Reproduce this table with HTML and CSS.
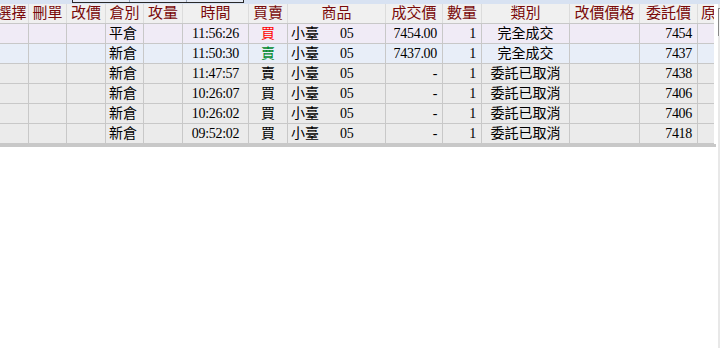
FILE: index.html
```html
<!DOCTYPE html>
<html lang="zh-Hant">
<head>
<meta charset="utf-8">
<title>委託回報</title>
<link rel="stylesheet" href="styles.css">
</head>
<body>
<div class="window">
  <div class="strip"><div class="tab"><span></span><span></span><span></span></div></div>
  <div class="main">
    <div class="grid">
      <div class="row head">
        <div class="c ctr"><span class="clip">選擇</span></div>
        <div class="c ctr">刪單</div>
        <div class="c ctr">改價</div>
        <div class="c ctr">倉別</div>
        <div class="c ctr">攻量</div>
        <div class="c ctr">時間</div>
        <div class="c ctr">買賣</div>
        <div class="c ctr">商品</div>
        <div class="c ctr">成交價</div>
        <div class="c ctr">數量</div>
        <div class="c ctr">類別</div>
        <div class="c ctr">改價價格</div>
        <div class="c ctr">委託價</div>
        <div class="c lft last">原</div>
      </div>

      <div class="row r1">
        <div class="c"></div><div class="c"></div><div class="c"></div>
        <div class="c lft">平倉</div>
        <div class="c"></div>
        <div class="c ctr num">11:56:26</div>
        <div class="c ctr buy">買</div>
        <div class="c lft"><span class="prod">小臺</span><span class="num">05</span></div>
        <div class="c rgt num">7454.00</div>
        <div class="c rgt num">1</div>
        <div class="c ctr">完全成交</div>
        <div class="c"></div>
        <div class="c rgt num">7454</div>
        <div class="c last"></div>
      </div>

      <div class="row r2">
        <div class="c"></div><div class="c"></div><div class="c"></div>
        <div class="c lft">新倉</div>
        <div class="c"></div>
        <div class="c ctr num">11:50:30</div>
        <div class="c ctr sell">賣</div>
        <div class="c lft"><span class="prod">小臺</span><span class="num">05</span></div>
        <div class="c rgt num">7437.00</div>
        <div class="c rgt num">1</div>
        <div class="c ctr">完全成交</div>
        <div class="c"></div>
        <div class="c rgt num">7437</div>
        <div class="c last"></div>
      </div>

      <div class="row rg">
        <div class="c"></div><div class="c"></div><div class="c"></div>
        <div class="c lft">新倉</div>
        <div class="c"></div>
        <div class="c ctr num">11:47:57</div>
        <div class="c ctr">賣</div>
        <div class="c lft"><span class="prod">小臺</span><span class="num">05</span></div>
        <div class="c rgt num">-</div>
        <div class="c rgt num">1</div>
        <div class="c ctr">委託已取消</div>
        <div class="c"></div>
        <div class="c rgt num">7438</div>
        <div class="c last"></div>
      </div>

      <div class="row rg">
        <div class="c"></div><div class="c"></div><div class="c"></div>
        <div class="c lft">新倉</div>
        <div class="c"></div>
        <div class="c ctr num">10:26:07</div>
        <div class="c ctr">買</div>
        <div class="c lft"><span class="prod">小臺</span><span class="num">05</span></div>
        <div class="c rgt num">-</div>
        <div class="c rgt num">1</div>
        <div class="c ctr">委託已取消</div>
        <div class="c"></div>
        <div class="c rgt num">7406</div>
        <div class="c last"></div>
      </div>

      <div class="row rg">
        <div class="c"></div><div class="c"></div><div class="c"></div>
        <div class="c lft">新倉</div>
        <div class="c"></div>
        <div class="c ctr num">10:26:02</div>
        <div class="c ctr">買</div>
        <div class="c lft"><span class="prod">小臺</span><span class="num">05</span></div>
        <div class="c rgt num">-</div>
        <div class="c rgt num">1</div>
        <div class="c ctr">委託已取消</div>
        <div class="c"></div>
        <div class="c rgt num">7406</div>
        <div class="c last"></div>
      </div>

      <div class="row rg">
        <div class="c"></div><div class="c"></div><div class="c"></div>
        <div class="c lft">新倉</div>
        <div class="c"></div>
        <div class="c ctr num">09:52:02</div>
        <div class="c ctr">買</div>
        <div class="c lft"><span class="prod">小臺</span><span class="num">05</span></div>
        <div class="c rgt num">-</div>
        <div class="c rgt num">1</div>
        <div class="c ctr">委託已取消</div>
        <div class="c"></div>
        <div class="c rgt num">7418</div>
        <div class="c last"></div>
      </div>
      <div class="bottom"></div>
    </div>
    <div class="scroll"><div class="sbtn"></div></div>
  </div>
</div>
</body>
</html>
```

FILE: styles.css
```css
* { box-sizing: border-box; }
html, body { margin: 0; padding: 0; background: #ffffff; }
body {
  width: 720px;
  height: 348px;
  overflow: hidden;
  font-family: "Liberation Serif", "Noto Sans CJK TC", serif;
  font-size: 14px;
  color: #000;
}
.strip {
  height: 4px;
  background: #d8e2f2;
  display: flex;
}
.tab {
  margin-left: 72px;
  width: 172px;
  height: 3px;
  border-left: 1px solid #2a2a2a;
  border-right: 1px solid #2a2a2a;
  border-bottom: 1px solid #2a2a2a;
  background: #e6ebf5;
  display: flex;
}
.tab span { flex: 1; border-right: 1px solid #9aa6bc; }
.tab span:last-child { border-right: none; }
.main { display: flex; }
.grid { width: 716px; }
.row {
  display: grid;
  grid-template-columns: 29px 38px 39px 38px 39px 66px 39px 98px 57px 39px 88px 70px 58px 16px;
  height: 20px;
  border-bottom: 1px solid #c8c8c8;
  width: 714px;
}
.c {
  border-right: 1px solid #c8c8c8;
  overflow: hidden;
  white-space: nowrap;
  display: flex;
  align-items: center;
  line-height: 19px;
}
.c.last { border-right: none; }
.ctr { justify-content: center; }
.lft { justify-content: flex-start; padding-left: 3px; }
.rgt { justify-content: flex-end; padding-right: 5px; }
.head {
  background: #f0f0f0;
  color: #7a0a0a;
  font-size: 15px;
}
.head .c { border-right-color: #dcdcdc; }
.clip { margin-left: -5px; }
.r1 { background: #f0ebf6; }
.r2 { background: #e8eef8; }
.rg { background: #ebebeb; }
.buy { color: #ff0000; }
.sell { color: #008a2e; }
.prod { display: inline-block; width: 49px; }
.num { font-family: "Liberation Serif", serif; letter-spacing: -0.3px; }
.bottom {
  height: 3px;
  width: 716px;
  background: #c8c8c8;
}
.scroll {
  width: 6px;
  height: 344px;
  border-left: 2px solid #ffffff;
  background: #e8e8e8;
}
.sbtn {
  height: 28px;
  margin-top: 4px;
  border-left: 1px solid #8a8a8a;
  border-top: 1px solid #8a8a8a;
  background: #f4f4f4;
}
```
